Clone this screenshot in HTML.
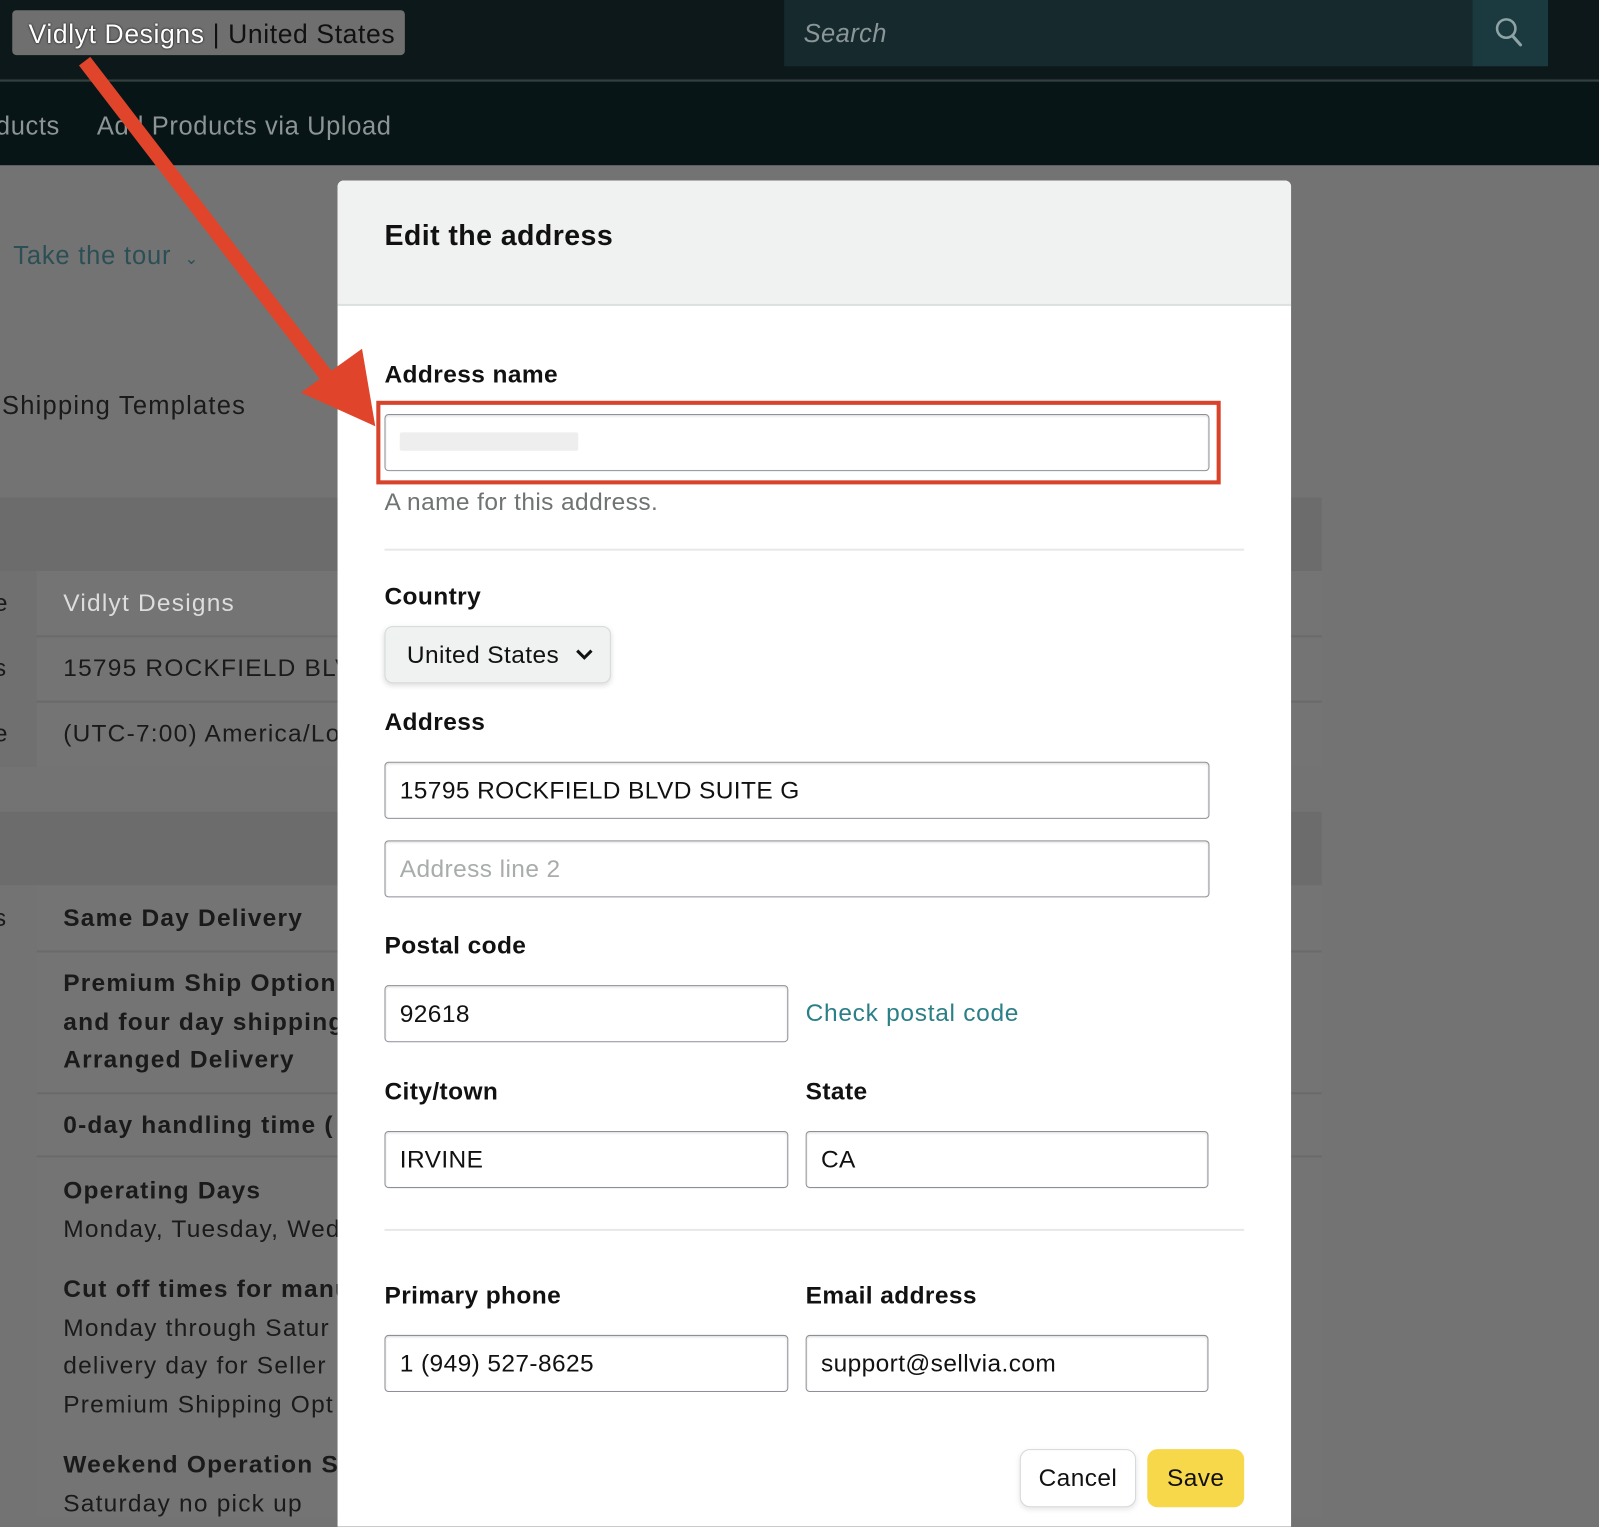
<!DOCTYPE html>
<html><head><meta charset="utf-8"><style>
html,body{margin:0;padding:0;width:1599px;height:1515px;overflow:hidden;background:#737373;}
#w{position:absolute;left:0;top:0;width:1568px;height:1486px;transform:scale(1.0198);transform-origin:0 0;font-family:"Liberation Sans",sans-serif;letter-spacing:0.4px;}
.a{position:absolute;white-space:nowrap;}
.lbl{position:absolute;font-size:24px;font-weight:bold;color:#111;white-space:nowrap;}
.inp{position:absolute;height:56px;border:1.5px solid #8d9096;border-radius:4px;background:#fff;box-shadow:inset 0 1px 2px rgba(0,0,0,.15);font-size:24px;color:#111;line-height:56px;padding-left:14px;box-sizing:border-box;white-space:nowrap;}
.bg{color:#1a1a1a;font-size:24px;letter-spacing:1.2px;}
.b{font-weight:bold;}
</style></head><body><div id="w">
<div class="a" style="left:0;top:0;width:1568px;height:78px;background:#0c1819;"></div>
<div class="a" style="left:0;top:78px;width:1568px;height:2px;background:#34403f;"></div>
<div class="a" style="left:0;top:80px;width:1568px;height:82px;background:#071516;"></div>
<div class="a" style="left:12px;top:10px;width:385px;height:44px;background:#6f6f6f;border-radius:4px;"></div>
<div class="a" style="left:28px;top:18px;font-size:26px;color:#111;letter-spacing:0.6px;"><span style="color:#fff;text-shadow:0 0 2px #000;">Vidlyt Designs</span> | United States</div>
<div class="a" style="left:769px;top:0;width:676px;height:65px;background:#162a2e;"></div>
<div class="a" style="left:788px;top:19px;font-size:25px;font-style:italic;color:#8a9697;">Search</div>
<div class="a" style="left:1444px;top:0;width:74px;height:65px;background:#1a3a40;"></div>
<svg class="a" style="left:1464px;top:16px" width="32" height="32" viewBox="0 0 32 32"><circle cx="13" cy="12" r="9" fill="none" stroke="#8fa3a5" stroke-width="2.5"/><path d="M19 19 L27 28" stroke="#8fa3a5" stroke-width="3" stroke-linecap="round"/></svg>
<div class="a" style="left:-4px;top:110px;font-size:25px;color:#8c9496;letter-spacing:0.6px;">ducts</div>
<div class="a" style="left:95px;top:110px;font-size:25px;color:#8c9496;letter-spacing:0.6px;">Add Products via Upload</div>
<div class="a bg" style="left:13px;top:237px;color:#2b4f55;font-size:25px;letter-spacing:0.8px;">Take the tour <span style="font-size:16px;">&nbsp;⌄</span></div>
<div class="a bg" style="left:2px;top:384px;font-size:25px;">Shipping Templates</div>
<div class="a" style="left:0;top:488px;width:1296px;height:72px;background:#6c6c6c;"></div>
<div class="a" style="left:0;top:560px;width:1296px;height:192px;background:#707070;"></div>
<div class="a" style="left:36px;top:560px;width:1260px;height:192px;background:#747474;"></div>
<div class="a" style="left:36px;top:623px;width:1260px;height:2px;background:#6a6a6a;"></div>
<div class="a" style="left:36px;top:687px;width:1260px;height:2px;background:#6a6a6a;"></div>
<div class="a bg" style="left:-6px;top:578px;">e</div>
<div class="a bg" style="left:62px;top:578px;color:#ddd;">Vidlyt Designs</div>
<div class="a bg" style="left:-6px;top:642px;">s</div>
<div class="a bg" style="left:62px;top:642px;">15795 ROCKFIELD BLVD</div>
<div class="a bg" style="left:-6px;top:706px;">e</div>
<div class="a bg" style="left:62px;top:706px;">(UTC-7:00) America/Los</div>
<div class="a" style="left:0;top:796px;width:1296px;height:72px;background:#6c6c6c;"></div>
<div class="a" style="left:36px;top:868px;width:1260px;height:620px;background:#747474;"></div>
<div class="a" style="left:36px;top:932px;width:1260px;height:2px;background:#6a6a6a;"></div>
<div class="a" style="left:36px;top:1071px;width:1260px;height:2px;background:#6a6a6a;"></div>
<div class="a" style="left:36px;top:1133px;width:1260px;height:2px;background:#6a6a6a;"></div>
<div class="a bg" style="left:-6px;top:887px;">s</div>
<div class="a bg b" style="left:62px;top:887px;">Same Day Delivery</div>
<div class="a bg b" style="left:62px;line-height:37.5px;top:946px;">Premium Ship Option<br>and four day shipping<br>Arranged Delivery</div>
<div class="a bg b" style="left:62px;top:1090px;">0-day handling time (</div>
<div class="a bg" style="left:62px;top:1149px;line-height:37.5px;"><b>Operating Days</b><br>Monday, Tuesday, Wed</div>
<div class="a bg" style="left:62px;top:1246px;line-height:37.5px;"><b>Cut off times for manu</b><br>Monday through Satur<br>delivery day for Seller<br>Premium Shipping Opt</div>
<div class="a bg" style="left:62px;top:1418px;line-height:37.5px;"><b>Weekend Operation S</b><br>Saturday no pick up</div>
<div class="a" style="left:331px;top:177px;width:935px;height:1320px;background:#fff;border-radius:6px 6px 0 0;overflow:hidden;">
  <div style="position:absolute;left:0;top:0;width:935px;height:121px;background:#f0f2f2;border-bottom:2px solid #dde0e0;"></div>
</div>
<div class="a" style="left:377px;top:215px;font-size:28px;font-weight:bold;color:#111;">Edit the address</div>
<div class="lbl" style="left:377px;top:354px;">Address name</div>
<div class="inp" style="left:377px;top:406px;width:809px;"></div>
<div class="a" style="left:392px;top:424px;width:175px;height:18px;background:#eee;border-radius:2px;"></div>
<div class="a" style="left:369px;top:393px;width:820px;height:74px;border:4px solid #d8432c;"></div>
<div class="a" style="left:377px;top:479px;font-size:24px;color:#6f7373;">A name for this address.</div>
<div class="a" style="left:377px;top:538px;width:843px;height:2px;background:#e7e9e9;"></div>
<div class="lbl" style="left:377px;top:572px;">Country</div>
<div class="a" style="left:377px;top:614px;width:222px;height:56px;background:#f0f2f2;border:1.5px solid #d5d9d9;border-radius:8px;box-shadow:0 2px 5px rgba(15,17,17,.15);box-sizing:border-box;"></div>
<div class="a" style="left:399px;top:629px;font-size:24px;color:#111;">United States</div>
<svg class="a" style="left:563px;top:634px" width="20" height="16" viewBox="0 0 20 16"><path d="M3 4 L10 11 L17 4" fill="none" stroke="#111" stroke-width="3"/></svg>
<div class="lbl" style="left:377px;top:695px;">Address</div>
<div class="inp" style="left:377px;top:747px;width:809px;">15795 ROCKFIELD BLVD SUITE G</div>
<div class="inp" style="left:377px;top:824px;width:809px;color:#a8acac;">Address line 2</div>
<div class="lbl" style="left:377px;top:914px;">Postal code</div>
<div class="inp" style="left:377px;top:966px;width:396px;">92618</div>
<div class="a" style="left:790px;top:980px;font-size:24px;color:#2b7f87;letter-spacing:0.7px;">Check postal code</div>
<div class="lbl" style="left:377px;top:1057px;">City/town</div>
<div class="lbl" style="left:790px;top:1057px;">State</div>
<div class="inp" style="left:377px;top:1109px;width:396px;">IRVINE</div>
<div class="inp" style="left:790px;top:1109px;width:395px;">CA</div>
<div class="a" style="left:377px;top:1205px;width:843px;height:2px;background:#e7e9e9;"></div>
<div class="lbl" style="left:377px;top:1257px;">Primary phone</div>
<div class="lbl" style="left:790px;top:1257px;">Email address</div>
<div class="inp" style="left:377px;top:1309px;width:396px;">1 (949) 527-8625</div>
<div class="inp" style="left:790px;top:1309px;width:395px;">support@sellvia.com</div>
<div class="a" style="left:1000px;top:1421px;width:114px;height:57px;border:1.5px solid #d5d9d9;border-radius:10px;background:#fff;box-sizing:border-box;box-shadow:0 2px 5px rgba(0,0,0,.1);text-align:center;line-height:55px;font-size:24px;color:#111;">Cancel</div>
<div class="a" style="left:1125px;top:1421px;width:95px;height:57px;border-radius:10px;background:#f7d84b;text-align:center;line-height:57px;font-size:24px;color:#111;">Save</div>
<svg class="a" style="left:0;top:0" width="1568" height="1486" viewBox="0 0 1568 1486">
<path d="M83 60 L338 392" stroke="#e0452b" stroke-width="14"/>
<polygon points="368,418 295,385 355,342" fill="#e0452b"/>
</svg>
</div></body></html>
